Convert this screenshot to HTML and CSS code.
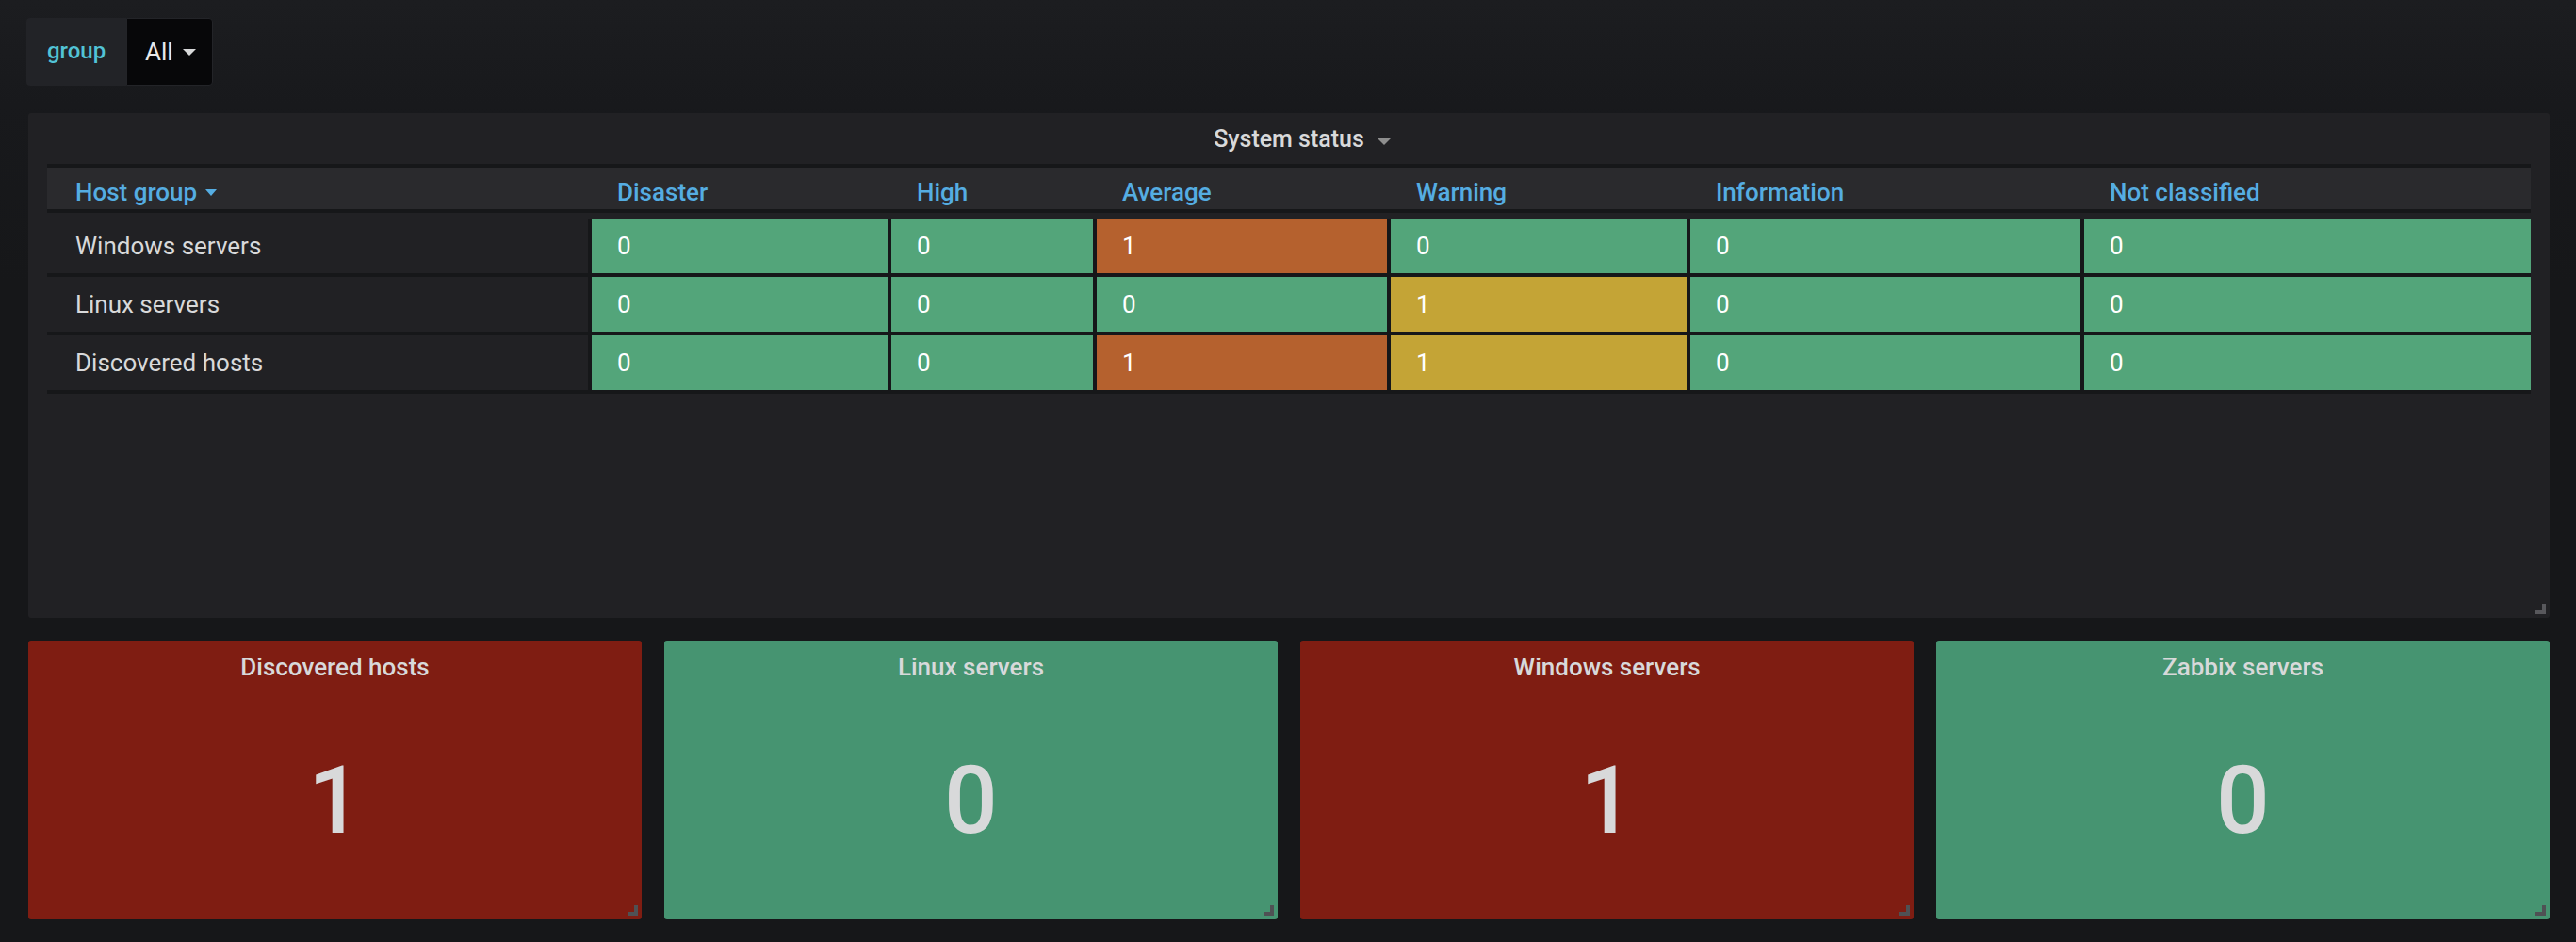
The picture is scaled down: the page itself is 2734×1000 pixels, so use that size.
FILE: index.html
```html
<!DOCTYPE html>
<html>
<head>
<meta charset="utf-8">
<link rel="stylesheet" href="styles.css">
</head>
<body>
<div class="page">
  <div class="var-bar">
    <div class="var-label">group</div>
    <div class="var-value">All <span class="caret caret-light"></span></div>
  </div>

  <div class="panel">
    <div class="panel-title"><span class="title-text">System status<span class="caret caret-gray title-caret"></span></span></div>
    <div class="table">
      <div class="row head">
        <div class="hcell host">Host group <span class="caret caret-blue"></span></div>
        <div class="hcell">Disaster</div>
        <div class="hcell">High</div>
        <div class="hcell">Average</div>
        <div class="hcell">Warning</div>
        <div class="hcell">Information</div>
        <div class="hcell">Not classified</div>
      </div>
      <div class="row first">
        <div class="cell host">Windows servers</div>
        <div class="cell ok">0</div>
        <div class="cell ok">0</div>
        <div class="cell avg">1</div>
        <div class="cell ok">0</div>
        <div class="cell ok">0</div>
        <div class="cell ok">0</div>
      </div>
      <div class="row">
        <div class="cell host">Linux servers</div>
        <div class="cell ok">0</div>
        <div class="cell ok">0</div>
        <div class="cell ok">0</div>
        <div class="cell warn">1</div>
        <div class="cell ok">0</div>
        <div class="cell ok">0</div>
      </div>
      <div class="row">
        <div class="cell host">Discovered hosts</div>
        <div class="cell ok">0</div>
        <div class="cell ok">0</div>
        <div class="cell avg">1</div>
        <div class="cell warn">1</div>
        <div class="cell ok">0</div>
        <div class="cell ok">0</div>
      </div>
    </div>
    <span class="resize"></span>
  </div>

  <div class="cards">
    <div class="card red">
      <div class="card-title">Discovered hosts</div>
      <div class="card-value">1</div>
      <span class="resize"></span>
    </div>
    <div class="card green">
      <div class="card-title">Linux servers</div>
      <div class="card-value">0</div>
      <span class="resize"></span>
    </div>
    <div class="card red">
      <div class="card-title">Windows servers</div>
      <div class="card-value">1</div>
      <span class="resize"></span>
    </div>
    <div class="card green">
      <div class="card-title">Zabbix servers</div>
      <div class="card-value">0</div>
      <span class="resize"></span>
    </div>
  </div>
</div>
</body>
</html>
```

FILE: styles.css
```css
* { box-sizing: border-box; }
html, body { margin: 0; padding: 0; }
body {
  width: 2734px;
  height: 1000px;
  overflow: hidden;
  background: linear-gradient(#1c1d20 0px, #18191c 110px, #161719 300px);
  font-family: Roboto, "Liberation Sans", sans-serif;
  color: #d8d9da;
}
.page {
  padding: 19px 28px 0 30px;
}

/* variable bar */
.var-bar {
  display: flex;
  height: 72px;
  margin-left: -2px;
}
.var-label {
  width: 106px;
  background: #222327;
  border-radius: 4px 0 0 4px;
  color: #52c3d6;
  font-size: 24px;
  font-weight: 500;
  display: flex;
  align-items: center;
  justify-content: center;
  padding-bottom: 2px;
}
.var-value {
  width: 92px;
  background: #070709;
  border: 1px solid #232428;
  border-radius: 0 4px 4px 0;
  color: #e8e9ea;
  font-size: 26px;
  display: flex;
  align-items: center;
  padding-left: 19px;
  gap: 10px;
}

.caret {
  display: inline-block;
  width: 0;
  height: 0;
  border-left: 7px solid transparent;
  border-right: 7px solid transparent;
  border-top: 7px solid #d8d9da;
}
.caret-light { border-top-color: #d8d9da; }
.caret-gray { border-top-color: #8e8e8e; border-left-width: 8px; border-right-width: 8px; border-top-width: 8px; }
.caret-blue { border-top-color: #55ade2; border-left-width: 6px; border-right-width: 6px; border-top-width: 7px; margin-left: 2px; }

/* panel */
.panel {
  position: relative;
  margin-top: 29px;
  height: 536px;
  background: #212124;
  border-radius: 3px;
  padding: 0 20px;
}
.panel-title {
  height: 54px;
  display: flex;
  align-items: center;
  justify-content: center;
  font-size: 25px;
  font-weight: 500;
  color: #d8d9da;
}
.title-text { position: relative; }
.title-caret {
  position: absolute;
  left: calc(100% + 13px);
  top: 13px;
}

.table {
  border-top: 4px solid #161719;
}
.row {
  display: grid;
  grid-template-columns: 574px 318px 218px 312px 318px 418px 478px;
  border-bottom: 4px solid #161719;
  font-size: 26px;
}
.row.head {
  height: 48px;
  background: #2a2a2d;
}
.row.first { padding-top: 6px; }
.hcell {
  display: flex;
  align-items: center;
  padding-left: 31px;
  padding-top: 8px;
  color: #55ade2;
  font-weight: 500;
  gap: 7px;
}
.hcell.host { padding-left: 30px; }
.cell {
  height: 58px;
  display: flex;
  align-items: center;
  padding-left: 27px;
  color: #ffffff;
  border-left: 4px solid #161719;
}
.cell.host {
  border-left: 0;
  padding-left: 30px;
  color: #d8d9da;
}
.cell.ok { background: #53a57a; }
.cell.avg { background: #b5612e; }
.cell.warn { background: #c4a436; }

.resize {
  position: absolute;
  right: 4px;
  bottom: 4px;
  width: 11px;
  height: 11px;
  border-right: 4px solid #58585c;
  border-bottom: 4px solid #58585c;
}

/* cards */
.cards {
  margin-top: 24px;
  display: grid;
  grid-template-columns: repeat(4, 1fr);
  gap: 24px;
}
.card {
  position: relative;
  height: 296px;
  border-radius: 3px;
  display: flex;
  flex-direction: column;
  align-items: center;
}
.card.red { background: #7f1d12; }
.card.green { background: #469471; }
.card-title {
  margin-top: 13px;
  font-size: 26px;
  line-height: 30px;
  font-weight: 500;
  color: #d8d9da;
}
.card-value {
  margin-top: 77px;
  font-size: 100px;
  line-height: 100px;
  font-weight: 500;
  color: #d8d9da;
}
.card .resize { right: 4px; bottom: 4px; border-color: #4f5154; }
```
